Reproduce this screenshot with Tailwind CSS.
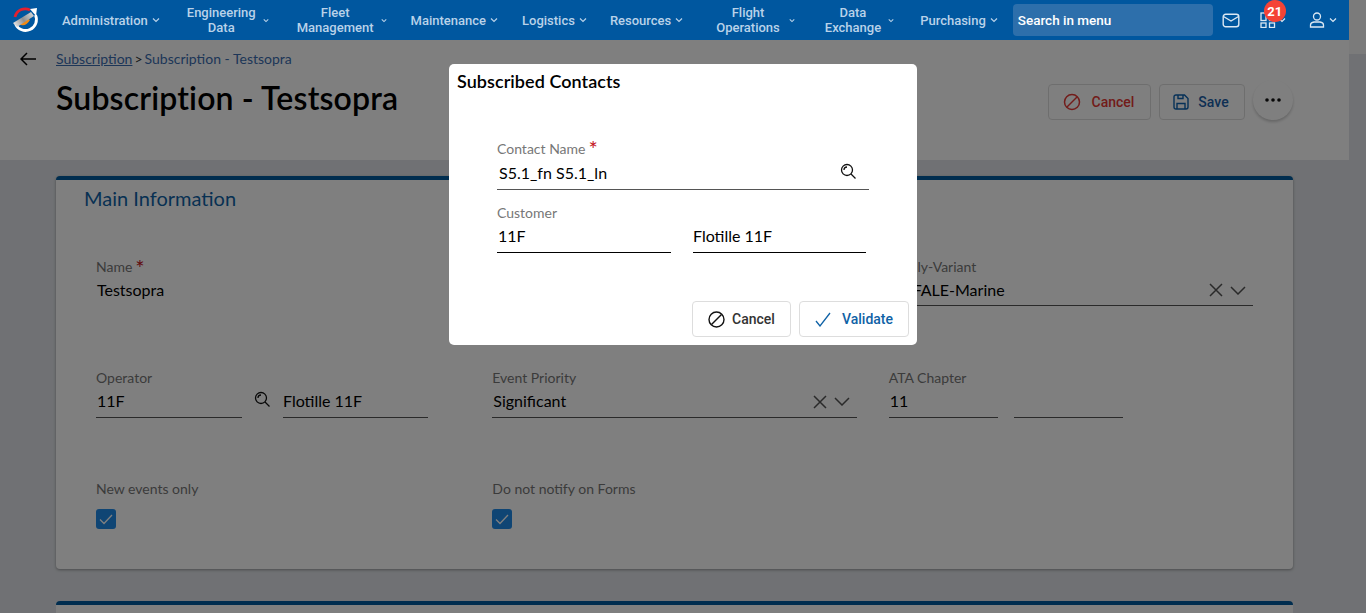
<!doctype html>
<html lang="en">
<head>
<meta charset="utf-8">
<title>Subscription - Testsopra</title>
<script src="https://cdn.jsdelivr.net/npm/@tailwindcss/browser@4"></script>
</head>
<body class="m-0 h-[613px] w-[1366px] overflow-hidden bg-[#e0e3e8] font-['Lato','Carlito',sans-serif]">
<div class="relative h-[613px] w-[1366px] overflow-hidden">
  <!-- scrollbar gutter top -->
  <div class="absolute right-0 top-0 h-[54px] w-[17px] bg-[#f6f6f6]"></div>

  <!-- Top nav -->
  <nav class="relative z-20 flex h-10 w-[1349px] items-center bg-[#00579f] font-['Roboto',sans-serif] text-[13px] font-medium leading-[15px] text-[#b9d2e9]">
    <div class="flex w-[62px] shrink-0 justify-start pl-[11px]">
      <svg width="28" height="26" viewBox="0 0 28 26" fill="none">
        <defs><linearGradient id="arrow" x1="2" y1="19" x2="24" y2="4" gradientUnits="userSpaceOnUse"><stop offset="0" stop-color="#f2f2f2"/><stop offset="0.45" stop-color="#8f8f8f"/><stop offset="1" stop-color="#e8e8e8"/></linearGradient></defs>
        <path d="M4 10 A10.5 10.5 0 0 1 19 3" stroke="#e4202e" stroke-width="2.8"/>
        <path d="M4.5 17 A10.5 10.5 0 0 0 24.5 8" stroke="#fff" stroke-width="2.8"/>
        <path d="M8 17 q6 4 11 -4 l-5 -3 z" fill="#f28a12"/>
        <path d="M2 16 L20 5 L23 9 L6 20 Z" fill="url(#arrow)"/>
        <path d="M19 2 L26 1 L25 9 Z" fill="#fff"/>
      </svg>
    </div>
    <div class="flex items-center"><span>Administration</span><svg class="ml-[4px]" width="8" height="6" viewBox="0 0 8 6" fill="none"><path d="M1 1.5 L4 4.5 L7 1.5" stroke="currentColor" stroke-width="1.2"/></svg></div>
    <div class="ml-[27px] flex items-center"><span class="text-center">Engineering<br>Data</span><svg class="ml-[7px]" width="6" height="5" viewBox="0 0 8 6" fill="none"><path d="M1 1.5 L4 4.5 L7 1.5" stroke="currentColor" stroke-width="1.4"/></svg></div>
    <div class="ml-[28px] flex items-center"><span class="text-center">Fleet<br>Management</span><svg class="ml-[7px]" width="6" height="5" viewBox="0 0 8 6" fill="none"><path d="M1 1.5 L4 4.5 L7 1.5" stroke="currentColor" stroke-width="1.4"/></svg></div>
    <div class="ml-[24px] flex items-center"><span>Maintenance</span><svg class="ml-[4px]" width="8" height="6" viewBox="0 0 8 6" fill="none"><path d="M1 1.5 L4 4.5 L7 1.5" stroke="currentColor" stroke-width="1.2"/></svg></div>
    <div class="ml-[24px] flex items-center"><span>Logistics</span><svg class="ml-[4px]" width="8" height="6" viewBox="0 0 8 6" fill="none"><path d="M1 1.5 L4 4.5 L7 1.5" stroke="currentColor" stroke-width="1.2"/></svg></div>
    <div class="ml-[23px] flex items-center"><span>Resources</span><svg class="ml-[4px]" width="8" height="6" viewBox="0 0 8 6" fill="none"><path d="M1 1.5 L4 4.5 L7 1.5" stroke="currentColor" stroke-width="1.2"/></svg></div>
    <div class="ml-[33px] flex items-center"><span class="text-center">Flight<br>Operations</span><svg class="ml-[9px]" width="6" height="5" viewBox="0 0 8 6" fill="none"><path d="M1 1.5 L4 4.5 L7 1.5" stroke="currentColor" stroke-width="1.4"/></svg></div>
    <div class="ml-[30px] flex items-center"><span class="text-center">Data<br>Exchange</span><svg class="ml-[7px]" width="6" height="5" viewBox="0 0 8 6" fill="none"><path d="M1 1.5 L4 4.5 L7 1.5" stroke="currentColor" stroke-width="1.4"/></svg></div>
    <div class="ml-[26px] flex items-center"><span>Purchasing</span><svg class="ml-[4px]" width="8" height="6" viewBox="0 0 8 6" fill="none"><path d="M1 1.5 L4 4.5 L7 1.5" stroke="currentColor" stroke-width="1.2"/></svg></div>
    <div class="ml-[15px] flex h-8 w-[200px] items-center rounded-[4px] bg-[#2d6fab] pl-[5px] text-[13.5px] text-white">Search in menu</div>
    <svg class="ml-[9px]" width="18" height="15" viewBox="0 0 18 15" fill="none" stroke="#dbe8f3" stroke-width="1.4"><rect x="1.2" y="1.2" width="15.6" height="12.6" rx="2.5"/><path d="M1.5 3.5 L9 8 L16.5 3.5"/></svg>
    <div class="relative ml-[20px] flex items-center">
      <svg width="16" height="16" viewBox="0 0 16 16" fill="none" stroke="#dbe8f3" stroke-width="1.3"><rect x="1" y="1" width="5" height="7.5"/><rect x="1" y="11" width="5" height="4.5"/><rect x="9.5" y="11" width="5" height="4.5"/><rect x="9.5" y="1" width="5" height="7.5"/></svg>
      <svg class="ml-[2px]" width="8" height="6" viewBox="0 0 8 6" fill="none"><path d="M1 1.5 L4 4.5 L7 1.5" stroke="#dbe8f3" stroke-width="1.2"/></svg>
      <span class="absolute left-[4px] top-[-12px] flex h-[22px] w-[22px] items-center justify-center rounded-full bg-[#f44336] text-[13px] font-bold text-white">21</span>
    </div>
    <svg class="ml-[23px]" width="16" height="16" viewBox="0 0 16 16" fill="none" stroke="#dbe8f3" stroke-width="1.3"><circle cx="8" cy="4.5" r="3.5"/><path d="M1.5 15 V13 Q1.5 10.5 5 10 H11 Q14.5 10.5 14.5 13 V15 Z"/></svg>
    <svg class="ml-[4px]" width="8" height="6" viewBox="0 0 8 6" fill="none"><path d="M1 1.5 L4 4.5 L7 1.5" stroke="#dbe8f3" stroke-width="1.2"/></svg>
  </nav>

  <!-- Page header -->
  <header class="relative flex h-[120px] w-[1349px] bg-white">
    <div class="w-[56px] shrink-0 pl-[20px] pt-[12px]">
      <svg width="16" height="14" viewBox="0 0 16 14" fill="none" stroke="#000" stroke-width="1.5"><path d="M16 7 H1 M7 1 L1 7 L7 13"/></svg>
    </div>
    <div class="flex-1 pt-[10px]">
      <div class="text-[14px] leading-[18px] text-[#3b6db0]"><span class="underline">Subscription</span><span class="mx-[2px] text-[#333]">&gt;</span><span>Subscription - Testsopra</span></div>
      <h1 class="mt-[10px] text-[32px] font-semibold leading-[40px] tracking-[0.15px] text-black">Subscription - Testsopra</h1>
    </div>
    <div class="flex items-start gap-2 pr-[56px] pt-[44px]">
      <button class="flex h-9 w-[103px] items-center justify-center gap-[11px] rounded-[4px] border border-[#ddd] bg-white pr-[2px] font-['Roboto',sans-serif] text-[14px] font-medium text-[#e53935]">
        <svg width="18" height="18" viewBox="0 0 18 18" fill="none" stroke="#e53935" stroke-width="1.5"><circle cx="9" cy="9" r="7.5"/><path d="M4 14 L14 4"/></svg>Cancel</button>
      <button class="flex h-9 w-[86px] items-center justify-center gap-[9px] rounded-[4px] border border-[#ddd] bg-white pr-[2px] font-['Roboto',sans-serif] text-[14px] font-medium text-[#1c5fa8]">
        <svg width="16" height="16" viewBox="0 0 16 16" fill="none" stroke="#0d62b0" stroke-width="1.4"><path d="M1 3 Q1 1 3 1 H11.5 L15 4.5 V13 Q15 15 13 15 H3 Q1 15 1 13 Z"/><path d="M4 15 V9.5 H12 V15 M5 1 V4.5 H10 V1"/></svg>Save</button>
      <div class="-mt-[4px] flex h-[40px] w-[40px] items-center justify-center rounded-full bg-white shadow-[0_2px_3px_rgba(0,0,0,0.2)]">
        <svg width="16" height="4" viewBox="0 0 16 4" fill="#111"><circle cx="2" cy="2" r="1.8"/><circle cx="8" cy="2" r="1.8"/><circle cx="14" cy="2" r="1.8"/></svg>
      </div>
    </div>
  </header>

  <!-- Main card -->
  <main class="pl-[56px] pt-[16px]">
    <section class="h-[393px] w-[1237px] rounded-[4px] border-t-4 border-[#005b9f] bg-white px-10 shadow-[0_1px_3px_rgba(0,0,0,0.35)]">
      <h2 class="-ml-[12px] pt-[5px] text-[20px] font-normal leading-[26px] text-[#0f62a6]">Main Information</h2>

      <div class="mt-[47px] grid grid-cols-3 gap-x-8 text-[16px] leading-[20px] text-black">
        <div class="h-[64px]">
          <div class="relative h-[18px] text-[14px] leading-[18px] text-[#777]">Name<span class="relative left-[3px] top-[4px] text-[22px] leading-[0] text-[#c4161c]">*</span></div>
          <div class="mt-[4px] h-[20px] pl-px">Testsopra</div>
        </div>
        <div class="h-[64px]"></div>
        <div class="h-[64px]">
          <div class="text-[14px] leading-[18px] text-[#777]">Family-Variant</div>
          <div class="mt-[4px] flex h-[20px] items-center pl-[24px]">FALE-Marine<span class="flex-1"></span>
            <svg width="14" height="14" viewBox="0 0 14 14" fill="none" stroke="#555" stroke-width="1.5"><path d="M1 1 L13 13 M13 1 L1 13"/></svg>
            <svg class="ml-[7px] mr-[7px]" width="16" height="9" viewBox="0 0 16 9" fill="none" stroke="#555" stroke-width="1.5"><path d="M1 1 L8 8 L15 1"/></svg>
          </div>
          <div class="mt-[5px] border-b border-[#555]"></div>
        </div>
      </div>

      <div class="mt-[47px] grid grid-cols-3 gap-x-8 text-[16px] leading-[20px] text-black">
        <div class="flex h-[64px] items-start">
          <div class="w-[146px]">
            <div class="text-[14px] leading-[18px] text-[#777]">Operator</div>
            <div class="mt-[4px] h-[27px] border-b border-[#555] pl-px">11F</div>
          </div>
          <svg class="ml-[12px] mt-[22px]" width="17" height="17" viewBox="0 0 17 17" fill="none" stroke="#111" stroke-width="1.3"><circle cx="7" cy="7" r="5.5"/><path d="M11 11 L15.5 15.5 M4 7 A3 3 0 0 1 7 4"/></svg>
          <div class="ml-[12px] w-[145px] pt-[22px]"><div class="h-[27px] border-b border-[#555]">Flotille 11F</div></div>
        </div>
        <div class="h-[64px]">
          <div class="text-[14px] leading-[18px] text-[#777]">Event Priority</div>
          <div class="mt-[4px] flex h-[27px] items-start border-b border-[#555] pl-px">Significant<span class="flex-1"></span>
            <svg class="mt-[4px]" width="14" height="14" viewBox="0 0 14 14" fill="none" stroke="#555" stroke-width="1.5"><path d="M1 1 L13 13 M13 1 L1 13"/></svg>
            <svg class="ml-[7px] mr-[7px] mt-[6px]" width="16" height="9" viewBox="0 0 16 9" fill="none" stroke="#555" stroke-width="1.5"><path d="M1 1 L8 8 L15 1"/></svg>
          </div>
        </div>
        <div class="flex h-[64px] items-start gap-[16px]">
          <div class="w-[109px]">
            <div class="text-[14px] leading-[18px] text-[#777]">ATA Chapter</div>
            <div class="mt-[4px] h-[27px] border-b border-[#555] pl-px">11</div>
          </div>
          <div class="w-[109px] pt-[22px]"><div class="h-[27px] border-b border-[#555]"></div></div>
        </div>
      </div>

      <div class="mt-[47px] grid grid-cols-3 gap-x-8">
        <div>
          <div class="text-[14px] leading-[18px] text-[#777]">New events only</div>
          <div class="mt-[11px] flex h-5 w-5 items-center justify-center rounded-[3px] bg-[#1f8ae8]">
            <svg width="14" height="11" viewBox="0 0 14 11" fill="none" stroke="#fff" stroke-width="1.3"><path d="M1 5.5 L5 9.5 L13 1"/></svg>
          </div>
        </div>
        <div>
          <div class="text-[14px] leading-[18px] text-[#777]">Do not notify on Forms</div>
          <div class="mt-[11px] flex h-5 w-5 items-center justify-center rounded-[3px] bg-[#1f8ae8]">
            <svg width="14" height="11" viewBox="0 0 14 11" fill="none" stroke="#fff" stroke-width="1.3"><path d="M1 5.5 L5 9.5 L13 1"/></svg>
          </div>
        </div>
      </div>
    </section>

    <section class="mt-[32px] h-[60px] w-[1237px] rounded-[4px] border-t-4 border-[#005b9f] bg-white"></section>
  </main>

  <!-- Backdrop -->
  <div class="absolute inset-0 z-10 bg-black/50"></div>

  <!-- Modal -->
  <div class="absolute left-[449px] top-[64px] z-30 h-[281px] w-[468px] rounded-[5px] bg-white text-black">
    <h3 class="pl-2 pt-[6px] text-[18px] font-semibold leading-[22px] tracking-[0.05px]">Subscribed Contacts</h3>

    <div class="ml-12 mt-[48px] w-[372px]">
      <div class="h-[18px] text-[14px] leading-[18px] text-[#777]">Contact Name<span class="relative left-[3px] top-[3px] text-[22px] leading-[0] text-[#c4161c]">*</span></div>
      <div class="mt-[4px] flex h-[28px] items-start border-b border-[#555] pl-[2px] text-[16px] leading-[22px]">S5.1_fn S5.1_ln<span class="flex-1"></span>
        <svg class="mr-[12px] mt-px" width="17" height="17" viewBox="0 0 17 17" fill="none" stroke="#111" stroke-width="1.3"><circle cx="7" cy="7" r="5.5"/><path d="M11 11 L15.5 15.5 M4 7 A3 3 0 0 1 7 4"/></svg>
      </div>
    </div>

    <div class="ml-12 mt-[14px]">
      <div class="text-[14px] leading-[18px] text-[#777]">Customer</div>
      <div class="mt-[3px] flex gap-[22px] text-[16px] leading-[22px]">
        <div class="h-[28px] w-[174px] border-b border-black pl-px">11F</div>
        <div class="h-[28px] w-[173px] border-b border-black">Flotille 11F</div>
      </div>
    </div>

    <div class="mt-[48px] flex justify-end gap-2 pr-2 font-['Roboto',sans-serif] text-[14px] font-medium">
      <button class="flex h-9 w-[99px] items-center justify-center gap-[7px] rounded-[4px] border border-[#ddd] bg-white text-[#333]">
        <svg width="17" height="17" viewBox="0 0 17 17" fill="none" stroke="#111" stroke-width="1.4"><circle cx="8.5" cy="8.5" r="7.5"/><path d="M3.5 13.5 L13.5 3.5"/></svg>Cancel</button>
      <button class="flex h-9 w-[110px] items-center justify-center gap-[11px] rounded-[4px] border border-[#ddd] bg-white text-[#0f62a6]">
        <svg width="16" height="15" viewBox="0 0 16 15" fill="none" stroke="#0f62a6" stroke-width="1.3"><path d="M1 9 L5 14 L15 1"/></svg>Validate</button>
    </div>
  </div>
</div>
</body>
</html>
